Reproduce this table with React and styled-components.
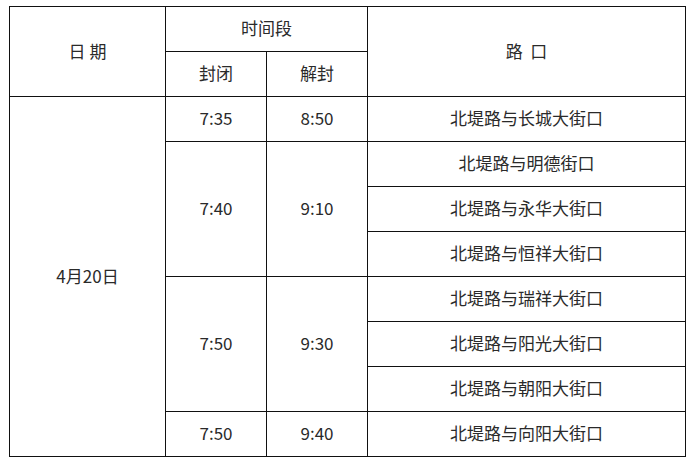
import React from "react";
import styled, { createGlobalStyle } from "styled-components";

const Global = createGlobalStyle`
  html, body { margin: 0; padding: 0; background: #fff; }
  body { font-family: "Noto Sans CJK SC", "Noto Sans", sans-serif; }
`;

const Page = styled.div`
  padding: 6px 0 0 9px;
`;

const Table = styled.table`
  border-collapse: collapse;
  width: 676px;
  table-layout: fixed;
  font-family: "Noto Sans CJK SC", "Noto Sans", sans-serif;
  font-size: 17px;
  color: #2a2a2a;
`;

const Cell = styled.td`
  border: 1.3px solid #111;
  height: 41px;
  padding: 0 0 3px 0;
  text-align: center;
  vertical-align: middle;
  line-height: 1;
  white-space: pre;
`;

const Col = styled.col``;

const rows = [
  { close: "7:35", open: "8:50", roads: ["北堤路与长城大街口"] },
  { close: "7:40", open: "9:10", roads: ["北堤路与明德街口", "北堤路与永华大街口", "北堤路与恒祥大街口"] },
  { close: "7:50", open: "9:30", roads: ["北堤路与瑞祥大街口", "北堤路与阳光大街口", "北堤路与朝阳大街口"] },
  { close: "7:50", open: "9:40", roads: ["北堤路与向阳大街口"] },
];

const total = rows.reduce((n, r) => n + r.roads.length, 0);

export default function App() {
  return (
    <Page>
      <Global />
      <Table>
        <colgroup>
          <Col style={{ width: 156 }} />
          <Col style={{ width: 101 }} />
          <Col style={{ width: 101 }} />
          <Col style={{ width: 318 }} />
        </colgroup>
        <tbody>
          <tr>
            <Cell rowSpan={2}>{"日 期"}</Cell>
            <Cell colSpan={2}>时间段</Cell>
            <Cell rowSpan={2}>{"路  口"}</Cell>
          </tr>
          <tr>
            <Cell>封闭</Cell>
            <Cell>解封</Cell>
          </tr>
          {rows.map((r, gi) =>
            r.roads.map((road, i) => (
              <tr key={`${gi}-${i}`}>
                {gi === 0 && i === 0 && <Cell rowSpan={total}>4月20日</Cell>}
                {i === 0 && <Cell rowSpan={r.roads.length}>{r.close}</Cell>}
                {i === 0 && <Cell rowSpan={r.roads.length}>{r.open}</Cell>}
                <Cell>{road}</Cell>
              </tr>
            ))
          )}
        </tbody>
      </Table>
    </Page>
  );
}
